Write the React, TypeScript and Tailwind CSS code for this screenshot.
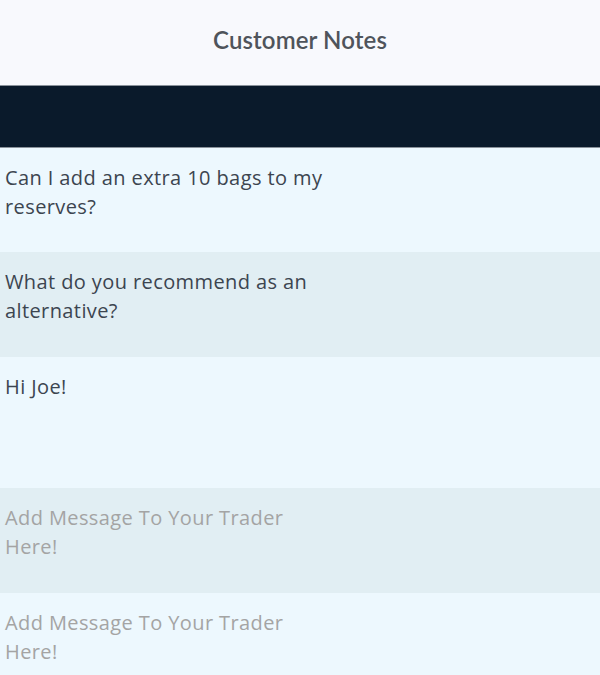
import React from "react";

const notes = [
  { text: "Can I add an extra 10 bags to my reserves?", h: "h-[104px]", bg: "bg-[#edf8fe]" },
  { text: "What do you recommend as an alternative?", h: "h-[105px]", bg: "bg-[#e1eef3]" },
  { text: "Hi Joe!", h: "h-[131px]", bg: "bg-[#edf8fe]" },
  { text: "", h: "h-[105px]", bg: "bg-[#e1eef3]" },
  { text: "", h: "h-[105px]", bg: "bg-[#edf8fe]" },
];

export default function App() {
  return (
    <div className="min-h-screen bg-[#edf8fe] font-['Lato','Noto_Sans',sans-serif]">
      <header className="h-[85px] bg-[#f8f9fd] flex items-center justify-center">
        <h1 className="text-[24px] font-semibold text-[#4f545b] tracking-[0.1px] -mt-[6px]">
          Customer Notes
        </h1>
      </header>

      <div className="h-[63px] bg-[#0a1a2b] border-y border-[#8a929b]" />

      <div className="flex flex-col">
        {notes.map((note, i) => (
          <div key={i} className={`${note.bg} ${note.h}`}>
            <textarea
              readOnly
              defaultValue={note.text}
              placeholder="Add Message To Your Trader Here!"
              className="block w-[330px] h-full resize-none bg-transparent outline-none pl-[5px] pt-[15px] font-['Open_Sans',sans-serif] text-[20px] leading-[29px] tracking-[0.4px] text-[#3c4550] placeholder:text-[#a4a4a4] overflow-hidden"
            />
          </div>
        ))}
      </div>
    </div>
  );
}
